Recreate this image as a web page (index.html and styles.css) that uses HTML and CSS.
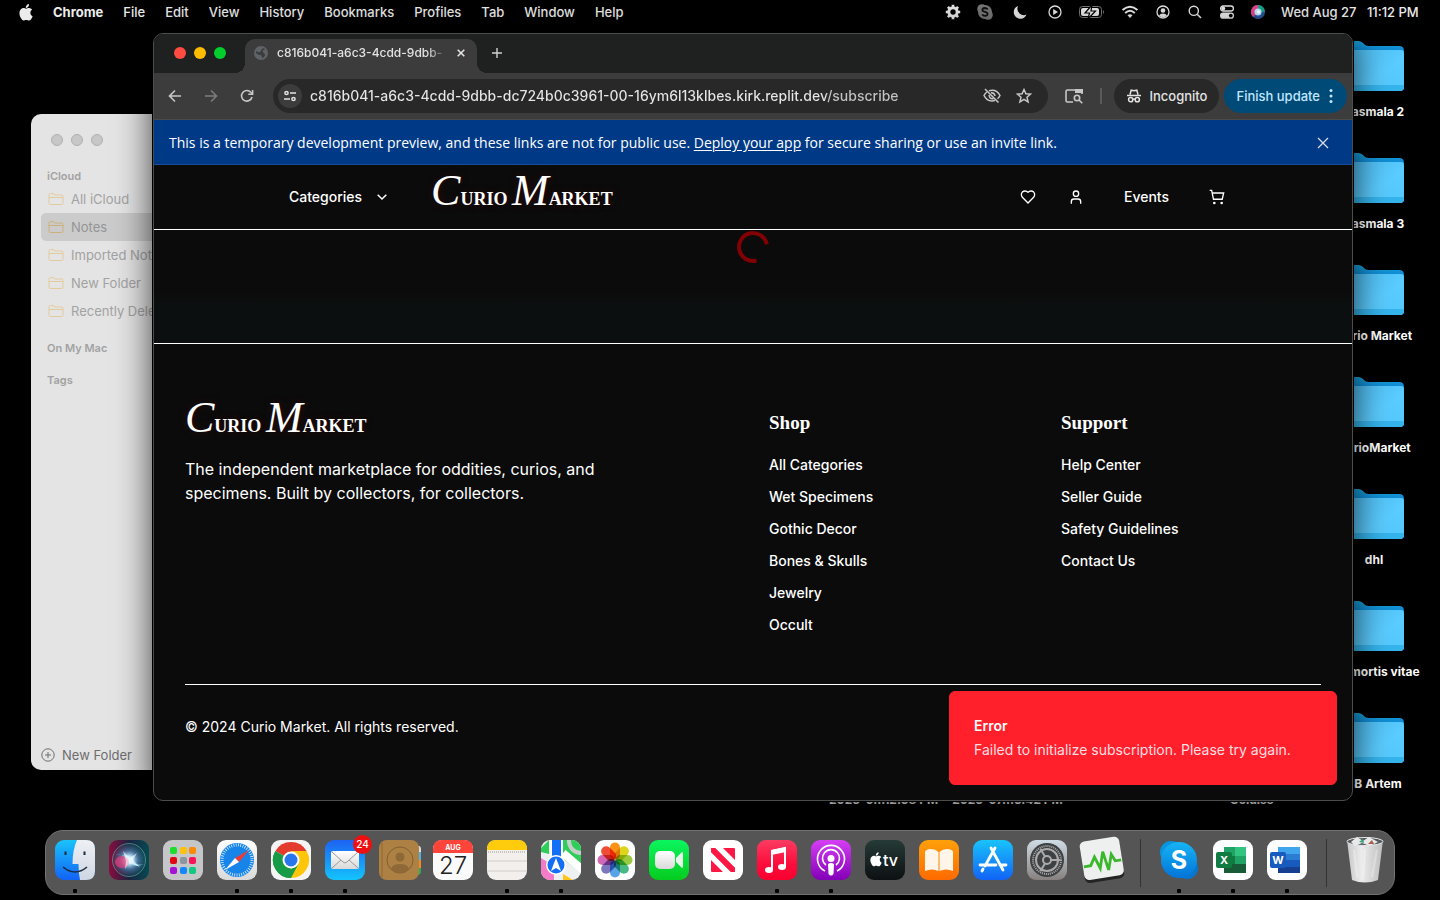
FILE: index.html
```html
<!DOCTYPE html>
<html lang="en">
<head>
<meta charset="utf-8">
<title>Curio Market</title>
<link rel="stylesheet" href="styles.css">
</head>
<body>
<svg class="defs" width="0" height="0" aria-hidden="true">
  <defs>
    <linearGradient id="folderFront" x1="0" y1="0" x2="1" y2="1"><stop offset="0" stop-color="#4fbdf2"/><stop offset=".6" stop-color="#5accff"/><stop offset="1" stop-color="#54c8fb"/></linearGradient>
    <linearGradient id="folderBack" x1="0" y1="0" x2="0" y2="1"><stop offset="0" stop-color="#1ba2dc"/><stop offset="1" stop-color="#0070c9"/></linearGradient>
    <linearGradient id="gBlue" x1="0" y1="0" x2="0" y2="1"><stop offset="0" stop-color="#19c3fb"/><stop offset="1" stop-color="#1263f5"/></linearGradient>
    <linearGradient id="gMail" x1="0" y1="0" x2="0" y2="1"><stop offset="0" stop-color="#1d62f2"/><stop offset="1" stop-color="#14c4fc"/></linearGradient>
    <linearGradient id="gWhite" x1="0" y1="0" x2="0" y2="1"><stop offset="0" stop-color="#ffffff"/><stop offset="1" stop-color="#d9d9da"/></linearGradient>
    <linearGradient id="gFace" x1="0" y1="0" x2="0" y2="1"><stop offset="0" stop-color="#eef0f5"/><stop offset="1" stop-color="#cfd6e2"/></linearGradient>
    <linearGradient id="gGreen" x1="0" y1="0" x2="0" y2="1"><stop offset="0" stop-color="#0bf55f"/><stop offset="1" stop-color="#05cc1e"/></linearGradient>
    <linearGradient id="gMusic" x1="0" y1="0" x2="0" y2="1"><stop offset="0" stop-color="#fb3c62"/><stop offset=".6" stop-color="#fc0d3c"/><stop offset="1" stop-color="#f80030"/></linearGradient>
    <linearGradient id="gPod" x1="0" y1="0" x2="0" y2="1"><stop offset="0" stop-color="#d53ff4"/><stop offset="1" stop-color="#8300b8"/></linearGradient>
    <linearGradient id="gTv" x1="0" y1="0" x2="0" y2="1"><stop offset="0" stop-color="#253a36"/><stop offset="1" stop-color="#0d1013"/></linearGradient>
    <linearGradient id="gBooks" x1="0" y1="0" x2="0" y2="1"><stop offset="0" stop-color="#ffa00a"/><stop offset="1" stop-color="#ff6a00"/></linearGradient>
    <linearGradient id="gSet" x1="0" y1="0" x2="0" y2="1"><stop offset="0" stop-color="#cfdde6"/><stop offset="1" stop-color="#87807e"/></linearGradient>
    <linearGradient id="gSkype" x1="0" y1="0" x2="0" y2="1"><stop offset="0" stop-color="#16b4f4"/><stop offset="1" stop-color="#0274d8"/></linearGradient>
    <linearGradient id="gBin" x1="0" y1="0" x2="1" y2="0"><stop offset="0" stop-color="#c8c8c8"/><stop offset=".4" stop-color="#ececec"/><stop offset="1" stop-color="#bdbdbd"/></linearGradient>
    <linearGradient id="gSiri" x1="0" y1="0" x2="1" y2="0"><stop offset="0" stop-color="#8a0c40"/><stop offset=".5" stop-color="#1b2340"/><stop offset="1" stop-color="#064a52"/></linearGradient>
    <radialGradient id="gOrb"><stop offset="0" stop-color="#fff"/><stop offset=".25" stop-color="#bfe9ff"/><stop offset=".6" stop-color="#5a8fc0" stop-opacity=".6"/><stop offset="1" stop-color="#2a6d80" stop-opacity=".2"/></radialGradient>
    <symbol id="folder" viewBox="0 0 60 50">
      <path d="M0 5Q0 0 5 0H14Q17 0 19 2L21 4Q23 5 25 5H55Q60 5 60 10V20H0Z" fill="url(#folderBack)"/>
      <path d="M0 9H57Q60 9 60 12V46Q60 50 56 50H4Q0 50 0 46Z" fill="url(#folderFront)"/>
      <path d="M0 44H60V46Q60 50 56 50H4Q0 50 0 46Z" fill="#35b4ec"/>
    </symbol>
    <symbol id="noteFolder" viewBox="0 0 16 14">
      <path d="M1 11V3Q1 1.500 2.500 1.500H5L7 3H13.500Q15 3 15 4.500V11Q15 12.500 13.500 12.500H2.500Q1 12.500 1 11ZM1 5.500H15" fill="none" stroke="currentColor"/>
    </symbol>
    <symbol id="apple" viewBox="0 0 14 17">
      <path d="M10 0Q10.200 1.800 9 3T6.800 4Q6.600 2.400 7.700 1.200T10 0ZM7 4.700C8 4.700 8.600 4 10.100 4Q12 4 13.100 5.600Q11.200 6.800 11.300 8.900Q11.400 11.300 13.600 12.300Q13 14 11.900 15.400Q11 16.500 10 16.500C8.900 16.500 8.500 15.900 7.200 15.900S5.500 16.500 4.500 16.500Q3.400 16.500 2 14.300Q.3 11.700 .4 9Q.5 6.500 1.900 5.200Q3.100 4.100 4.500 4.100C5.600 4.100 6.200 4.700 7 4.700Z" fill="currentColor"/>
    </symbol>
  </defs>
</svg>
<div class="desktop">
  <header class="menubar">
    <nav class="menus" aria-label="Menu bar">
      <svg class="apple" width="14" height="17"><use href="#apple"/></svg>
      <button class="app-name">Chrome</button><button>File</button><button>Edit</button><button>View</button><button>History</button><button>Bookmarks</button><button>Profiles</button><button>Tab</button><button>Window</button><button>Help</button>
    </nav>
    <div class="status">
      <svg width="16" height="16" viewBox="0 0 16 16"><circle cx="8" cy="8" r="4.200" fill="none" stroke="#e6e6e6" stroke-width="3"/><path d="M8 .8V3M8 13V15.200M.8 8H3M13 8H15.200M2.900 2.900L4.500 4.500M11.500 11.500L13.100 13.100M2.900 13.100L4.500 11.500M11.500 4.500L13.100 2.900" stroke="#e6e6e6" stroke-width="2.600"/></svg>
      <svg width="16" height="16" viewBox="0 0 16 16"><circle cx="5" cy="5" r="4.800" fill="#777"/><circle cx="11" cy="11" r="4.800" fill="#777"/><circle cx="8" cy="8" r="7" fill="#777"/><path d="M10.800 5.400Q9.600 4 7.800 4Q5.400 4.200 5.400 5.900Q5.400 7.300 8 7.800Q10.700 8.400 10.600 10Q10.400 11.900 8 11.900Q6 11.900 5.200 10.400" fill="none" stroke="#111" stroke-width="1.800"/></svg>
      <svg width="22" height="16" viewBox="0 0 22 16"><path d="M9 2A6.600 6.600 0 1 0 17.500 10.600A6.500 6.500 0 0 1 9 2Z" fill="#e6e6e6"/></svg>
      <svg width="16" height="16" viewBox="0 0 16 16"><circle cx="8" cy="8" r="6" fill="none" stroke="#e6e6e6" stroke-width="1.300"/><path d="M6.200 5V11L11 8Z" fill="#e6e6e6"/></svg>
      <svg width="26" height="14" viewBox="0 0 26 14"><rect x=".5" y="1.500" width="22" height="11" rx="3" fill="none" stroke="#777"/><rect x="2" y="3" width="18" height="8" rx="2" fill="#e6e6e6"/><path d="M13 0L6 8H10.500L9 14L16.500 6H12Z" fill="#e6e6e6" stroke="#000" stroke-width="1.200"/><path d="M24 5Q26 7 24 9Z" fill="#777"/></svg>
      <svg width="18" height="14" viewBox="0 0 18 14"><path d="M1.500 5Q9-1.600 16.500 5M4.200 8Q9 3.600 13.800 8" fill="none" stroke="#e6e6e6" stroke-width="2"/><path d="M6.500 10.300Q9 8 11.500 10.300L9 13Z" fill="#e6e6e6"/></svg>
      <svg width="16" height="14" viewBox="0 0 14 14"><circle cx="7" cy="7" r="6" fill="none" stroke="#e6e6e6" stroke-width="1.300"/><circle cx="7" cy="5.500" r="2.300" fill="#e6e6e6"/><path d="M3 10.800Q4 8.500 7 8.500T11 10.800Q9 12.500 7 12.500T3 10.800Z" fill="#e6e6e6"/></svg>
      <svg width="16" height="14" viewBox="0 0 14 14"><circle cx="5.800" cy="5.800" r="4.600" fill="none" stroke="#e6e6e6" stroke-width="1.400"/><path d="M9.200 9.200L13 13" stroke="#e6e6e6" stroke-width="1.600"/></svg>
      <svg width="16" height="14" viewBox="0 0 16 14"><rect x="1.600" y="1" width="12.800" height="5" rx="2.500" fill="none" stroke="#e6e6e6" stroke-width="1.300"/><circle cx="4.200" cy="3.500" r="2" fill="#e6e6e6"/><rect x="1" y="7.500" width="14" height="6.300" rx="3.100" fill="#e6e6e6"/><circle cx="11.800" cy="10.600" r="1.900" fill="#000"/></svg>
      <svg width="14" height="14" viewBox="0 0 14 14"><circle cx="7" cy="7" r="7" fill="#28549a"/><path d="M7 0A7 7 0 0 0 2 12L7 7Z" fill="#e0458b"/><path d="M7 0A7 7 0 0 1 14 7L7 7Z" fill="#1aa287"/><circle cx="7" cy="7" r="3.500" fill="#b8e8ff"/><circle cx="7.500" cy="7" r="1.800" fill="#fff"/></svg>
      <time>Wed Aug 27&nbsp;&nbsp; 11:12 PM</time>
    </div>
  </header>

  <ul class="shortcuts">
    <li><svg width="60" height="50"><use href="#folder"/></svg><span>Basmala 2</span></li>
    <li><svg width="60" height="50"><use href="#folder"/></svg><span>Basmala 3</span></li>
    <li><svg width="60" height="50"><use href="#folder"/></svg><span>Curio Market</span></li>
    <li><svg width="60" height="50"><use href="#folder"/></svg><span>CurioMarket</span></li>
    <li><svg width="60" height="50"><use href="#folder"/></svg><span>dhl</span></li>
    <li><svg width="60" height="50"><use href="#folder"/></svg><span>ars mortis vitae</span></li>
    <li><svg width="60" height="50"><use href="#folder"/></svg><span>BB Artem</span></li>
  </ul>
  <div class="file-labels"><span>2025-0...12.58 PM</span><span>2025-07...5.42 PM</span><span class="last">Coldiss</span></div>

  <aside class="notes">
    <div class="notes-lights"><i></i><i></i><i></i></div>
    <h2>iCloud</h2>
    <ul>
      <li><svg width="16" height="14"><use href="#noteFolder"/></svg>All iCloud</li>
      <li class="selected"><svg width="16" height="14"><use href="#noteFolder"/></svg>Notes</li>
      <li><svg width="16" height="14"><use href="#noteFolder"/></svg>Imported Notes</li>
      <li><svg width="16" height="14"><use href="#noteFolder"/></svg>New Folder</li>
      <li><svg width="16" height="14"><use href="#noteFolder"/></svg>Recently Deleted</li>
    </ul>
    <h2 class="spaced">On My Mac</h2>
    <h2 class="spaced">Tags</h2>
    <button class="new-folder"><svg width="14" height="14" viewBox="0 0 14 14" fill="none" stroke="currentColor"><circle cx="7" cy="7" r="6.200"/><path d="M7 4V10M4 7H10"/></svg>New Folder</button>
  </aside>

  <main class="window">
    <div class="tabstrip">
      <div class="lights"><button aria-label="Close window"></button><button aria-label="Minimize"></button><button aria-label="Zoom"></button></div>
      <div class="tab">
        <svg width="14" height="14" viewBox="0 0 14 14"><circle cx="7" cy="7" r="7" fill="#5f6368"/><path d="M2 5Q5 7 6 6T8 3Q10 1.500 11 3.500Q8 4 9 6T11 8Q11 11 8 12Q8 9 6 9T2 7Z" fill="#3c3c3c"/></svg>
        <span class="tab-title">c816b041-a6c3-4cdd-9dbb-</span>
        <button class="icon" aria-label="Close tab"><svg width="8" height="8" viewBox="0 0 8 8" stroke="#e3e3e3" stroke-width="1.600"><path d="M.7 .7L7.300 7.300M7.300 .7L.7 7.300"/></svg></button>
      </div>
      <button class="icon plus" aria-label="New tab"><svg width="10" height="10" viewBox="0 0 10 10" stroke="#d0d0d0" stroke-width="1.400"><path d="M5 0V10M0 5H10"/></svg></button>
    </div>
    <div class="toolbar">
      <div class="travel">
        <button class="icon" aria-label="Back"><svg width="14" height="14" viewBox="0 0 14 14" fill="none" stroke="#c7c7c7" stroke-width="1.600"><path d="M13 7H2M7 1.500L1.500 7L7 12.500"/></svg></button>
        <button class="icon" aria-label="Forward"><svg width="14" height="14" viewBox="0 0 14 14" fill="none" stroke="#7d7d7d" stroke-width="1.600"><path d="M1 7H12M7 1.500L12.500 7L7 12.500"/></svg></button>
        <button class="icon" aria-label="Reload"><svg width="14" height="14" viewBox="0 0 14 14" fill="none" stroke="#c7c7c7" stroke-width="1.600"><path d="M12 8A5.300 5.300 0 1 1 10.800 3.300L12.500 5"/><path d="M12.600 1V5.300H8.300"/></svg></button>
      </div>
      <div class="omnibox">
        <button class="site icon" aria-label="Site information"><svg width="12" height="12" viewBox="0 0 12 12" fill="none" stroke="#e3e3e3" stroke-width="1.500"><circle cx="2.500" cy="3" r="1.600"/><path d="M6 3H12M0 9H6"/><circle cx="9.500" cy="9" r="1.600"/></svg></button>
        <input class="url" aria-label="Address" value="c816b041-a6c3-4cdd-9dbb-dc724b0c3961-00-16ym6l13klbes.kirk.replit.dev/subscribe">
        <button class="icon" aria-label="Tracking protection"><svg width="18" height="16" viewBox="0 0 18 16" fill="none" stroke="#c7c7c7" stroke-width="1.500"><path d="M6 2.800Q13.500 .5 17 7.500Q16 9.500 14.500 10.800M12 12.500Q4.500 14.500 1 7.500Q2 5.300 3.800 4"/><path d="M8 4.800Q11.500 4.500 12 8M10.500 10.500Q6.500 11.500 6 7"/><path d="M2 1L15.500 14.500"/></svg></button>
        <button class="icon" aria-label="Bookmark this tab"><svg width="16" height="16" viewBox="0 0 16 16" fill="none" stroke="#c7c7c7" stroke-width="1.500"><path d="M8 1.500L9.900 5.800L14.500 6.200L11 9.300L12.100 13.900L8 11.400L3.900 13.900L5 9.300L1.500 6.200L6.100 5.800Z"/></svg></button>
      </div>
      <button class="icon lens" aria-label="Search this page"><svg width="18" height="16" viewBox="0 0 18 16" fill="none" stroke="#c7c7c7" stroke-width="1.600"><path d="M8 14H2.500Q1 14 1 12.500V3.500Q1 2 2.500 2H15.500Q17 2 17 3.500V6"/><path d="M10 1H18V5H10Z" fill="#c7c7c7" stroke="none"/><circle cx="12" cy="10" r="2.700"/><path d="M14 12L17.300 15.300"/></svg></button>
      <i class="divider"></i>
      <div class="chips">
        <button class="chip"><svg width="16" height="16" viewBox="0 0 16 16" fill="none" stroke="#e3e3e3" stroke-width="1.500"><path d="M4 6.500L5.200 2.200L8 2.800L10.800 2.200L12 6.500M1 7.500H15"/><circle cx="4.700" cy="11.700" r="2.100"/><circle cx="11.300" cy="11.700" r="2.100"/><path d="M6.800 11.400Q8 10.700 9.200 11.400"/></svg>Incognito</button>
        <button class="chip update">Finish update<svg width="4" height="16" viewBox="0 0 4 16" fill="#c2e7ff"><circle cx="2" cy="2.500" r="1.500"/><circle cx="2" cy="8" r="1.500"/><circle cx="2" cy="13.500" r="1.500"/></svg></button>
      </div>
    </div>
    <div class="banner">
      <p>This is a temporary development preview, and these links are not for public use. <a href="#">Deploy your app</a> for secure sharing or use an invite link.</p>
      <button class="icon" aria-label="Dismiss"><svg width="10" height="10" viewBox="0 0 10 10" stroke="#d6def0" stroke-width="1.300"><path d="M0 0L10 10M10 0L0 10"/></svg></button>
    </div>
    <div class="site-nav">
      <div class="nav-inner">
        <button class="categories">Categories<svg width="10" height="6" viewBox="0 0 10 6" fill="none" stroke="#fff" stroke-width="1.500"><path d="M.7 .7L5 5L9.300 .7"/></svg></button>
        <a class="logo" href="#"><b>C</b>URIO <b>M</b>ARKET</a>
        <div class="nav-right">
          <button class="icon" aria-label="Favorites"><svg width="16" height="16" viewBox="0 0 24 24" fill="none" stroke="#fff" stroke-width="2"><path d="M19 14c1.490-1.460 3-3.210 3-5.500A5.500 5.500 0 0 0 16.500 3c-1.760 0-3 .5-4.500 2-1.500-1.500-2.740-2-4.500-2A5.500 5.500 0 0 0 2 8.500c0 2.300 1.500 4.050 3 5.500l7 7Z"/></svg></button>
          <button class="icon" aria-label="Account"><svg width="16" height="16" viewBox="0 0 24 24" fill="none" stroke="#fff" stroke-width="2"><path d="M19 22v-3a4 4 0 0 0-4-4H9a4 4 0 0 0-4 4v3"/><circle cx="12" cy="7" r="4"/></svg></button>
          <a class="events" href="#">Events</a>
          <button class="icon" aria-label="Cart"><svg width="16" height="16" viewBox="0 0 24 24" fill="none" stroke="#fff" stroke-width="2"><circle cx="8" cy="21" r="1"/><circle cx="19" cy="21" r="1"/><path d="M1 2h3l2.700 13.400h13.100L22 6H5"/></svg></button>
        </div>
      </div>
    </div>
    <section class="loading"><svg width="32" height="32" viewBox="0 0 32 32" fill="none" stroke="#800003" stroke-width="4"><path d="M29.800 13.400A14 14 0 1 0 19.600 29.500"/></svg></section>
    <footer class="footer">
      <div class="footer-grid">
        <div class="about"><a class="logo" href="#"><b>C</b>URIO <b>M</b>ARKET</a><p>The independent marketplace for oddities, curios, and specimens. Built by collectors, for collectors.</p></div>
        <nav aria-label="Shop"><h3>Shop</h3><ul><li><a href="#">All Categories</a></li><li><a href="#">Wet Specimens</a></li><li><a href="#">Gothic Decor</a></li><li><a href="#">Bones &amp; Skulls</a></li><li><a href="#">Jewelry</a></li><li><a href="#">Occult</a></li></ul></nav>
        <nav aria-label="Support"><h3>Support</h3><ul><li><a href="#">Help Center</a></li><li><a href="#">Seller Guide</a></li><li><a href="#">Safety Guidelines</a></li><li><a href="#">Contact Us</a></li></ul></nav>
      </div>
      <p class="copyright">© 2024 Curio Market. All rights reserved.</p>
    </footer>
    <div class="toast" role="alert"><strong>Error</strong><p>Failed to initialize subscription. Please try again.</p></div>
  </main>

  <div class="dock">
    <div class="app running"><svg viewBox="0 0 40 40"><rect width="40" height="40" rx="9" fill="url(#gBlue)"/><path d="M22 0H31Q40 0 40 9V31Q40 40 31 40H25Q23.500 33 23.500 24H17.500Q17.500 10 22 0Z" fill="url(#gFace)"/><path d="M10.500 11.500V15M29.500 11.500V15" stroke="#1c2a3c" stroke-width="2"/><path d="M8 27Q20 37 32 27" fill="none" stroke="#1c2a3c" stroke-width="1.500"/></svg></div>
    <div class="app"><svg viewBox="0 0 40 40"><rect width="40" height="40" rx="9" fill="url(#gSiri)"/><circle cx="20" cy="20" r="16" fill="url(#gOrb)"/><circle cx="20" cy="20" r="16.500" fill="none" stroke="#63b8a8" stroke-opacity=".6"/><ellipse cx="13" cy="22" rx="7" ry="6" fill="#e83b79" opacity=".7"/><path d="M6 15Q18 14 22 20T35 24Q25 29 20 21T6 15Z" fill="#8ceaff" opacity=".6"/><path d="M14 11L21 18L28 13L24 20L31 27L20 23L16 29L17 21Z" fill="#fff" opacity=".6"/></svg></div>
    <div class="app"><svg viewBox="0 0 40 40"><rect width="40" height="40" rx="9" fill="#c5c6c7"/><g><rect x="7" y="7" width="7" height="7" rx="2" fill="#1fdd2d"/><rect x="17" y="7" width="7" height="7" rx="2" fill="#fcc10d"/><rect x="26" y="7" width="7" height="7" rx="2" fill="#fb8b06"/><rect x="7" y="17" width="7" height="7" rx="2" fill="#e10712"/><rect x="17" y="17" width="7" height="7" rx="2" fill="#8c979d"/><rect x="26" y="17" width="7" height="7" rx="2" fill="#fb1358"/><rect x="7" y="27" width="7" height="7" rx="2" fill="#a512d6"/><rect x="17" y="27" width="7" height="7" rx="2" fill="#1687fb"/><rect x="26" y="27" width="7" height="7" rx="2" fill="#12c883"/></g></svg></div>
    <div class="app running"><svg viewBox="0 0 40 40"><rect width="40" height="40" rx="9" fill="url(#gWhite)"/><circle cx="20" cy="20" r="17" fill="#1784ea"/><circle cx="20" cy="20" r="15" fill="none" stroke="#d8efff" stroke-width="3" stroke-dasharray=".8 1.500"/><path d="M32 10L22 22L18 18Z" fill="#f23a35"/><path d="M8 30L18 18L22 22Z" fill="#fff"/></svg></div>
    <div class="app running"><svg viewBox="0 0 40 40"><rect width="40" height="40" rx="9" fill="#f4f4f4"/><path d="M20 20L4.400 11A18 18 0 0 1 35.600 11Z" fill="#e33b2e"/><path d="M20 20L35.600 11A18 18 0 0 1 20 38Z" fill="#fdc60a"/><path d="M20 20L20 38A18 18 0 0 1 4.400 11Z" fill="#169b47"/><path d="M20 11H35.600L28 24L20 38Z" fill="#fdc60a"/><path d="M4.400 11L12 24L20 29L27.500 24L20 38A18 18 0 0 1 4.400 11Z" fill="#169b47"/><circle cx="20" cy="20" r="8.500" fill="#fff"/><circle cx="20" cy="20" r="6.500" fill="#2776ec"/></svg></div>
    <div class="app running"><svg viewBox="0 0 40 40"><rect width="40" height="40" rx="9" fill="url(#gMail)"/><rect x="6" y="11" width="28" height="18" rx="2" fill="url(#gWhite)"/><path d="M7 12L18 22Q20 24 22 22L33 12M7 28L16 20M33 28L24 20" fill="none" stroke="#999" stroke-width="1"/></svg><span class="badge">24</span></div>
    <div class="app"><svg viewBox="0 0 40 40"><path d="M34 6H40Q42 6 42 10V12H36Z" fill="#ddd"/><path d="M35 12H42V20H35Z" fill="#4bb4e2"/><path d="M35 20H42V28H35Z" fill="#f18b23"/><path d="M35 28H42V32Q42 35 38 35Z" fill="#29ae58"/><rect width="40" height="40" rx="8" fill="#ad8143"/><path d="M3 3V37" stroke="#8e672f"/><g fill="none" stroke="#82602f"><circle cx="21" cy="20" r="13"/></g><circle cx="21" cy="17" r="4.500" fill="#8e6937"/><path d="M12 29Q13 24 21 24T30 29Q26 33 21 33T12 29Z" fill="#8e6937"/></svg></div>
    <div class="app"><svg viewBox="0 0 40 40"><rect width="40" height="40" rx="9" fill="#fafafa"/><path d="M9 0H31Q40 0 40 9V13H0V9Q0 0 9 0Z" fill="#ff443a"/><text class="cal-month" x="20" y="10">AUG</text><text class="cal-day" x="20" y="34">27</text></svg></div>
    <div class="app running"><svg viewBox="0 0 40 40"><rect width="40" height="40" rx="9" fill="#f2efec"/><path d="M9 0H31Q40 0 40 9V10H0V9Q0 0 9 0Z" fill="#ffcb0d"/><path d="M1 12H39" stroke="#999" stroke-dasharray="1 1"/><path d="M0 21H40M0 31H40" stroke="#d0cdca"/></svg></div>
    <div class="app running"><svg viewBox="0 0 40 40"><clipPath id="mapClip"><rect width="40" height="40" rx="9"/></clipPath><g clip-path="url(#mapClip)"><rect width="40" height="40" fill="#eef1f2"/><path d="M20 0H40V33L20 17Z" fill="#2fce58"/><path d="M0 18L13 26V40H0Z" fill="#f47bc7"/><path d="M0 8L8 0V14L0 12Z" fill="#2fce58"/><path d="M22 40V34L32 40Z" fill="#ffc517"/><path d="M22 13L44 32" stroke="#fff" stroke-width="8"/><circle cx="40" cy="1" r="12" fill="none" stroke="#c7cdcd" stroke-width="4"/><path d="M15.500 0V20" stroke="#fff" stroke-width="13"/><path d="M15.500 0V20" stroke="#1370f6" stroke-width="9"/><circle cx="15" cy="25" r="10" fill="#fff"/><circle cx="15" cy="25" r="8.500" fill="#1370f6"/><path d="M15 18L20 31L15 28L10 31Z" fill="#fff"/></g></svg></div>
    <div class="app"><svg class="petals" viewBox="0 0 40 40"><rect width="40" height="40" rx="9" fill="#fff"/><g><rect x="15" y="2.500" width="10" height="17" rx="5" fill="#fb9215"/><rect x="15" y="2.500" width="10" height="17" rx="5" fill="#ded419" transform="rotate(45 20 20)"/><rect x="15" y="2.500" width="10" height="17" rx="5" fill="#9bca3e" transform="rotate(90 20 20)"/><rect x="15" y="2.500" width="10" height="17" rx="5" fill="#48b985" transform="rotate(135 20 20)"/><rect x="15" y="2.500" width="10" height="17" rx="5" fill="#58a5e6" transform="rotate(180 20 20)"/><rect x="15" y="2.500" width="10" height="17" rx="5" fill="#7c78bd" transform="rotate(225 20 20)"/><rect x="15" y="2.500" width="10" height="17" rx="5" fill="#d268b4" transform="rotate(270 20 20)"/><rect x="15" y="2.500" width="10" height="17" rx="5" fill="#f04b33" transform="rotate(315 20 20)"/></g></svg></div>
    <div class="app"><svg viewBox="0 0 40 40"><rect width="40" height="40" rx="9" fill="url(#gGreen)"/><rect x="6" y="11" width="20" height="18" rx="5" fill="url(#gWhite)"/><path d="M27 18L33 12Q34 12 34 14V26Q34 28 33 28L27 22Z" fill="#e7f7e8"/></svg></div>
    <div class="app"><svg viewBox="0 0 40 40"><rect width="40" height="40" rx="9" fill="#fff"/><rect x="8" y="8" width="24" height="24" rx="1" fill="#fd1744"/><path d="M8 12V20L20 32H28ZM12 8H20L32 20V28Z" fill="#fff"/><path d="M8 8H12L32 28V32H28L8 12Z" fill="#fd1744"/></svg></div>
    <div class="app running"><svg viewBox="0 0 40 40"><rect width="40" height="40" rx="9" fill="url(#gMusic)"/><path d="M15 11L28 8V27" fill="none" stroke="#fff" stroke-width="2"/><path d="M14 10L29 7V12L14 15Z" fill="#fff"/><path d="M15 12V30" stroke="#fff" stroke-width="2"/><ellipse cx="12" cy="30" rx="4" ry="3" fill="#fff"/><ellipse cx="25" cy="27" rx="4" ry="3" fill="#fff"/></svg></div>
    <div class="app running"><svg viewBox="0 0 40 40"><rect width="40" height="40" rx="9" fill="url(#gPod)"/><g fill="none" stroke="#fff" stroke-width="1.600"><path d="M14 31A13.500 13.500 0 1 1 26 31"/><path d="M15 25A8.500 8.500 0 1 1 25 25"/></g><circle cx="20" cy="18.500" r="3.500" fill="#fff"/><path d="M17 24Q20 22 23 24L22.500 34Q20 37 17.500 34Z" fill="#fff"/></svg></div>
    <div class="app"><svg viewBox="0 0 40 40"><rect width="40" height="40" rx="9" fill="url(#gTv)"/><svg class="tv-apple" x="5" y="12" width="12" height="15"><use href="#apple"/></svg><text class="tv" x="18" y="26">tv</text></svg></div>
    <div class="app"><svg viewBox="0 0 40 40"><rect width="40" height="40" rx="9" fill="url(#gBooks)"/><path d="M19.500 12Q16 8.500 11 9Q6 10 6 12V31Q13 28 19.500 31ZM20.500 12Q24 8.500 29 9Q34 10 34 12V31Q27 28 20.500 31Z" fill="#fff5e8"/></svg></div>
    <div class="app"><svg viewBox="0 0 40 40"><rect width="40" height="40" rx="9" fill="url(#gBlue)"/><path d="M18 8L30 30M22 8L12 26M7 25H23M27 25H33M10 29L9 31" stroke="#fff" stroke-width="2.800" stroke-linecap="round"/></svg></div>
    <div class="app"><svg viewBox="0 0 40 40"><rect width="40" height="40" rx="9" fill="url(#gSet)"/><circle cx="20" cy="20" r="17" fill="#3e4144"/><circle cx="20" cy="20" r="14" fill="none" stroke="#aaa" stroke-width="2" stroke-dasharray="1 1"/><circle cx="20" cy="20" r="11" fill="none" stroke="#aaa" stroke-width="2"/><circle cx="20" cy="20" r="4" fill="none" stroke="#aaa" stroke-width="2"/><path d="M24 20H33M18 16.500L13.500 9M18 23.500L13.500 31" stroke="#aaa" stroke-width="2"/></svg></div>
    <div class="app"><svg viewBox="0 0 40 40"><g transform="rotate(-9 20 20)"><rect x="1" y="1" width="40" height="40" rx="5" fill="#242424"/><rect x="1" y="-1" width="40" height="39" rx="5" fill="#eeefef"/><path d="M2 24H9L14 16L18 28L23 12L26 31L31 16L34 23H40" fill="none" stroke="#3bb72b" stroke-width="2.800"/></g></svg></div>
    <i class="sep"></i>
    <div class="app running"><svg viewBox="0 0 40 40"><circle cx="12" cy="12" r="11" fill="#0994df"/><circle cx="28" cy="28" r="11" fill="#0676d1"/><circle cx="20" cy="20" r="18" fill="url(#gSkype)"/><text class="letter skype" x="20" y="29">S</text></svg></div>
    <div class="app running"><svg viewBox="0 0 40 40"><rect width="40" height="40" rx="9" fill="#fff"/><rect x="11" y="7" width="22" height="26" rx="1" fill="#107c41"/><path d="M11 7H22V16H11ZM22 16H33V24H22Z" fill="#21a366"/><path d="M22 7H33V16H22Z" fill="#33c481"/><path d="M11 24H33V33H11Z" fill="#185c37"/><rect x="3" y="12" width="16" height="16" rx="2" fill="#107c41"/><text class="letter" x="11" y="24">X</text></svg></div>
    <div class="app running"><svg viewBox="0 0 40 40"><rect width="40" height="40" rx="9" fill="#fff"/><rect x="11" y="7" width="22" height="26" rx="1" fill="#185abd"/><path d="M11 7H33V14H11Z" fill="#41a5ee"/><path d="M11 14H33V20H11Z" fill="#2b7cd3"/><path d="M11 27H33V33H11Z" fill="#173f91"/><rect x="3" y="12" width="16" height="16" rx="2" fill="#185abd"/><text class="letter" x="11" y="24">W</text></svg></div>
    <i class="sep"></i>
    <div class="app"><svg viewBox="0 0 40 40"><path d="M2 0H38L33 40Q20 45 7 40Z" fill="url(#gBin)"/><ellipse cx="20" cy="1.500" rx="18" ry="4" fill="#555b5e" stroke="#e6e6e6"/><path d="M6 2L12-3L18 1L24-3L33 2L25 6L17 3L10 6Z" fill="#e9e9e9"/><path d="M14 2L18-1L19 3Z" fill="#39a77c"/><path d="M23 4L27 0L29 4Z" fill="#aa5d48"/><path d="M9 10L12 37M20 9L18 39M32 10L27 37" stroke="#fff" stroke-opacity=".3" stroke-width="2"/></svg></div>
  </div>
</div>
</body>
</html>
```
FILE: styles.css
```css
* { box-sizing: border-box; }
body { margin: 0; background: #000; color: #fff; font-family: Inter, "Liberation Sans", sans-serif; font-size: 14px; line-height: 20px; }
button, input { font: inherit; color: inherit; background: none; border: 0; padding: 0; margin: 0; white-space: nowrap; }
ul { list-style: none; margin: 0; padding: 0; }
p, h2, h3 { margin: 0; }
a { color: inherit; text-decoration: none; }
svg { display: block; flex: none; overflow: visible; }
.defs { position: absolute; }
.icon { display: grid; place-items: center; flex: none; width: 28px; height: 28px; }

.desktop { position: relative; min-height: 100vh; overflow: hidden; }

.menubar { display: flex; justify-content: space-between; align-items: center; height: 24px; padding: 0 19px; font-size: 13px; font-weight: 500; color: #ececec; }
.menus, .status { display: flex; align-items: center; }
.menus { gap: 20px; }
.status { gap: 16px; }
.status time { min-width: 140px; }
.app-name { font-weight: 700; }

.shortcuts { position: absolute; top: 41px; right: 16px; width: 100px; display: grid; gap: 42px; font-size: 12px; font-weight: 700; }
.shortcuts li { display: grid; justify-items: center; height: 70px; gap: 12px; white-space: nowrap; }
.shortcuts li span { line-height: 18px; }
.shortcuts li svg { height: 50px; }

.file-labels { position: absolute; left: 829px; top: 790px; display: flex; gap: 14px; font-size: 12px; font-weight: 700; color: #fff; white-space: nowrap; }
.file-labels .last { margin-left: 153px; }

.notes { position: absolute; left: 31px; top: 114px; width: 400px; height: 656px; padding: 20px 10px 5px; border-radius: 10px; background: #e4e4e4; color: #a2a2a2; font-size: 13px; display: flex; flex-direction: column; }
.notes-lights { display: flex; gap: 8px; padding-left: 10px; margin-bottom: 21px; }
.notes-lights i { width: 12px; height: 12px; border-radius: 50%; background: #c7c7c7; border: 1px solid #b0b0b0; }
.notes h2 { font-size: 11px; font-weight: 600; line-height: 18px; padding-left: 6px; }
.notes h2.spaced { margin-top: 14px; }
.notes li { display: flex; align-items: center; gap: 7px; height: 28px; padding-left: 7px; border-radius: 5px; }
.notes li svg { color: #e4cb9a; }
.notes li.selected { background: #cbcbcb; color: #959595; }
.notes li.selected svg { color: #cdb17d; }
.new-folder { display: flex; align-items: center; gap: 7px; margin-top: auto; color: #6d6d6d; }

.window { position: absolute; left: 153px; right: 87px; top: 33px; height: 768px; border: 1px solid #4b4d4c; border-radius: 10px; background: #0b0b0b; overflow: hidden; display: flex; flex-direction: column; box-shadow: 0 0 0 1px #000, 0 4px 36px rgba(0,0,0,.75); }
.tabstrip { display: flex; align-items: center; height: 39px; padding-bottom: 1px; background: #1f2120; flex: none; }
.lights { display: flex; gap: 8px; padding: 0 19px 0 20px; }
.lights button { width: 12px; height: 12px; border-radius: 50%; background: #ff4b42; }
.lights button:nth-child(2) { background: #fdbc02; }
.lights button:nth-child(3) { background: #02ce2d; }
.tab { position: relative; align-self: flex-end; display: flex; align-items: center; width: 232px; height: 34px; margin-bottom: -1px; padding: 0 2px 6px 9px; background: #3c3c3c; border-radius: 10px 10px 0 0; color: #e3e3e3; font-size: 12px; font-weight: 500; }
.tab::before, .tab::after { content: ""; position: absolute; bottom: 0; width: 10px; height: 10px; }
.tab::before { left: -10px; background: radial-gradient(circle at 0 0, transparent 10px, #3c3c3c 10px); }
.tab::after { right: -10px; background: radial-gradient(circle at 100% 0, transparent 10px, #3c3c3c 10px); }
.tab-title { flex: 1; margin-left: 9px; white-space: nowrap; -webkit-mask-image: linear-gradient(90deg, #000 88%, transparent); mask-image: linear-gradient(90deg, #000 88%, transparent); }
.plus { margin-left: 6px; }

.toolbar { display: flex; align-items: center; gap: 12px; height: 47px; flex: none; padding: 0 5px 0 7px; background: #3c3c3c; border-bottom: 1px solid #4a4a48; }
.travel { display: flex; gap: 8px; }
.omnibox { flex: 1; display: flex; align-items: center; gap: 4px; height: 34px; padding: 0 10px 0 5px; border-radius: 17px; background: #282828; }
.site { width: 24px; height: 24px; border-radius: 50%; background: #3c3c3c; }
.url { flex: 1; min-width: 0; margin-left: 4px; outline: 0; font-size: 14px; font-weight: 500; color: transparent; background: linear-gradient(90deg, #e6e6e6 516px, #c4c4c4 516px); -webkit-background-clip: text; background-clip: text; }
.divider { width: 2px; height: 16px; background: #5a5a5a; }
.chips { display: flex; gap: 5px; }
.chip { display: flex; align-items: center; gap: 7px; height: 34px; padding: 0 12px; border-radius: 17px; background: #282828; color: #e3e3e3; font-size: 13px; font-weight: 500; }
.chip.update { padding-right: 14px; gap: 9px; background: #004a77; color: #c2e7ff; }

.banner { display: flex; align-items: center; justify-content: space-between; flex: none; height: 45px; padding: 1px 15px 0; background: #003a87; border-bottom: 1px solid #174d9d; }
.banner p { font-family: "Open Sans", sans-serif; }
.banner a { text-decoration: underline; font-weight: 500; text-underline-offset: 2px; }

.site-nav { flex: none; height: 65px; border-bottom: 1px solid #fff; }
.nav-inner { display: flex; align-items: center; max-width: 960px; height: 64px; margin: 0 auto; font-weight: 500; }
.categories { display: flex; align-items: center; gap: 15px; padding: 0 16px; margin-right: 28px; }
.logo { padding-top: 4px; font-family: "Liberation Serif", serif; font-size: 18px; font-weight: 700; line-height: 36px; white-space: nowrap; text-shadow: 0 0 8px rgba(160,0,0,.25); }
.logo b { font-size: 44px; line-height: 0; font-style: italic; font-weight: 400; }
.nav-right { display: flex; align-items: center; gap: 16px; margin-left: auto; }
.nav-right .icon { width: 32px; }
.events { padding: 0 16px; }

.loading { flex: none; height: 113px; display: flex; justify-content: center; background: linear-gradient(#0b0b0b 55%, #0c0f0f 65%); }
.loading svg { margin-top: 1px; }

.footer { flex: 1; border-top: 1px solid #fff; padding: 60px 31px 0; }
.footer-grid { display: grid; grid-template-columns: repeat(4, 1fr); gap: 32px; padding-bottom: 49px; }
.about { grid-column: span 2; }
.about .logo { display: block; }
.about p { max-width: 448px; margin-top: 13px; font-size: 16px; line-height: 24px; }
.footer h3 { font-family: "Liberation Serif", serif; font-size: 19px; line-height: 28px; margin: 5px 0 18px; }
.footer nav ul { display: grid; gap: 12px; font-weight: 500; }
.copyright { border-top: 1px solid #fff; padding-top: 32px; }

.toast { position: absolute; right: 15px; bottom: 15px; width: 388px; padding: 24px; border: 1px solid #ff202b; border-radius: 6px; background: #ff202b; }
.toast strong { display: block; margin-bottom: 4px; font-weight: 600; }
.toast p { color: #ffdfe0; white-space: nowrap; }

.dock { position: absolute; left: 50%; bottom: 5px; transform: translateX(-50%); display: flex; gap: 14px; height: 65px; padding: 9px; border: 1px solid #727272; border-radius: 18px; background: #555; }
.app { position: relative; width: 40px; height: 40px; flex: none; }
.app > svg { width: 40px; height: 40px; }
.petals { isolation: isolate; }
.petals g rect { mix-blend-mode: multiply; }
.running::after { content: ""; position: absolute; left: 18px; top: 49px; width: 4px; height: 4px; border-radius: 1px; background: #000; }
.badge { position: absolute; top: -5px; right: -7px; width: 19px; height: 19px; border-radius: 50%; background: #ee1010; font-size: 10px; line-height: 19px; font-weight: 500; text-align: center; }
.sep { width: 10px; height: 48px; margin-top: -1px; background: linear-gradient(#333, #333) center / 1px 100% no-repeat; }
.cal-month { font-size: 7px; font-weight: 700; fill: #fff; text-anchor: middle; }
.cal-day { font-size: 24px; font-weight: 300; fill: #222; text-anchor: middle; }
.tv-apple { color: #fff; }
.tv { font-size: 16px; font-weight: 500; fill: #fff; }
.letter { font-size: 11px; font-weight: 700; fill: #fff; text-anchor: middle; }
.skype { font-size: 25px; }
```
